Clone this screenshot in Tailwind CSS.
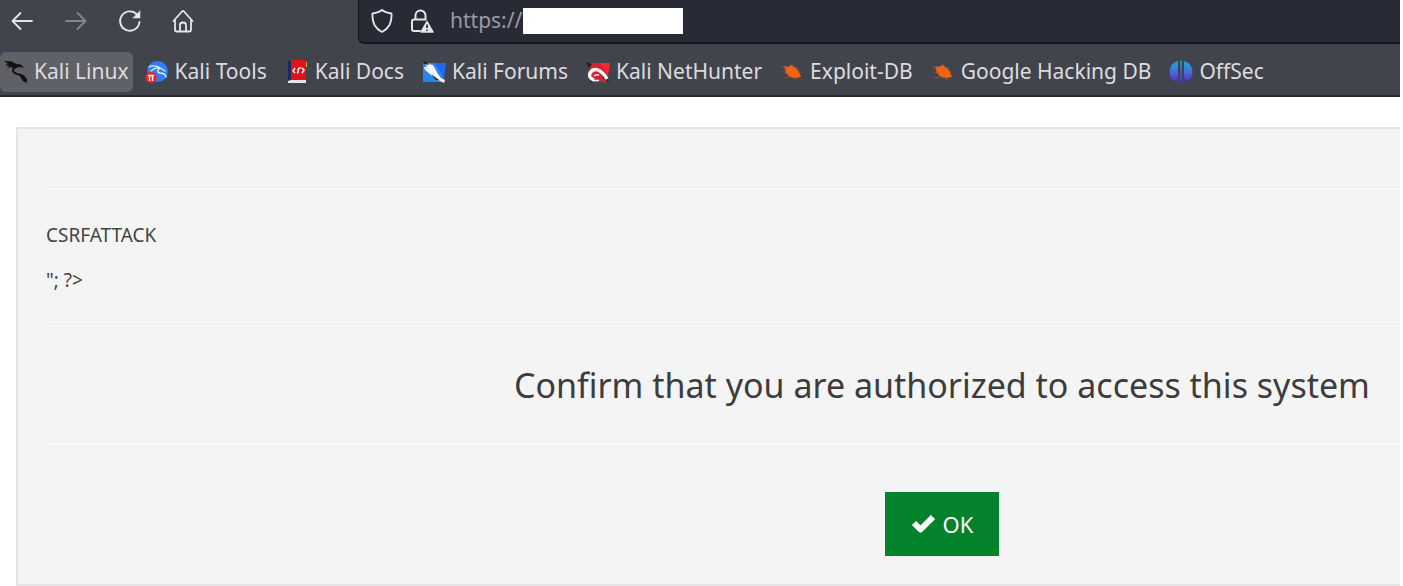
<!DOCTYPE html>
<html lang="en">
<head>
  <meta charset="UTF-8" />
  <meta name="viewport" content="width=device-width, initial-scale=1.0"/>
  <title>Authorization check</title>
  <script src="https://cdn.jsdelivr.net/npm/@tailwindcss/browser@4"></script>
</head>
<body class="min-h-screen flex flex-col pr-[3px] bg-white overflow-hidden font-['Noto_Sans',sans-serif]">
  <!-- Browser toolbar -->
  <header class="bg-[#42444d] border-b-2 border-[#2b2c33]">
    <nav class="flex h-11 text-[#e6e6e8]">
      <div class="flex items-center gap-[30px] w-[358px] shrink-0 pl-[10px] pb-[2px]">
        <button type="button" aria-label="Back">
          <svg class="w-6 h-6" viewBox="0 0 24 24" fill="none" stroke="currentColor" stroke-width="1.8" stroke-linecap="round" stroke-linejoin="round"><path d="M22 12H2.500M10.500 4L2.500 12L10.500 20"/></svg>
        </button>
        <button type="button" aria-label="Forward" class="text-[#85868d]">
          <svg class="w-6 h-6" viewBox="0 0 24 24" fill="none" stroke="currentColor" stroke-width="1.8" stroke-linecap="round" stroke-linejoin="round"><path d="M2 12H21.500M13.500 4L21.500 12L13.500 20"/></svg>
        </button>
        <button type="button" aria-label="Reload">
          <svg class="w-6 h-6" viewBox="0 0 24 24" fill="none" stroke="currentColor" stroke-width="1.9" stroke-linecap="round"><path d="M19 5.500A9.700 9.700 0 1 0 21.500 13"/><path d="M22 2V9H15Z" fill="currentColor" stroke-width="0.500" stroke-linejoin="round"/></svg>
        </button>
        <button type="button" aria-label="Home">
          <svg class="w-6 h-6" viewBox="0 0 24 24" fill="none" stroke="currentColor" stroke-width="1.8" stroke-linecap="round" stroke-linejoin="round"><path d="M1.500 12L10 2.500Q11 1.600 12 2.500L20.500 12M3 10.500V20.500Q3 22.500 5 22.500H17Q19 22.500 19 20.500V10.500M8 22.500V16Q8 13.500 11 13.500Q14 13.500 14 16V22.500"/></svg>
        </button>
      </div>
      <div class="flex items-center grow bg-[#282a36] border-l border-b-2 border-[#17181f] rounded-bl-md pl-[11px]">
        <svg class="w-6 h-6 shrink-0" viewBox="0 0 24 24" fill="none" stroke="currentColor" stroke-width="1.800" stroke-linejoin="round"><path d="M12 1Q15 3.500 21.500 4.500Q22 11 19.500 16Q17 20.500 12 23Q7 20.500 4.500 16Q2 11 2.500 4.500Q9 3.500 12 1Z"/></svg>
        <svg class="w-6 h-6 shrink-0 ml-4" viewBox="0 0 24 24" fill="none" stroke="currentColor" stroke-width="2" stroke-linejoin="round"><path d="M5.500 10.500V6.500A5 5 0 0 1 15.500 6.500V10.500M10.500 22H4Q2 22 2 20V12.500Q2 10.500 4 10.500H16.500"/><path d="M17 12.500L23 23H11Z" fill="currentColor" stroke-width="1.500"/><path d="M17 15.500V19M17 20.500V21.800" stroke="#282a36" stroke-width="1.700"/></svg>
        <input type="text" aria-label="Address" value="https://" class="w-[73px] ml-4 text-[21px] text-[#9a9ba3] bg-transparent outline-none" />
        <span class="w-40 h-[26px] bg-white shrink-0"></span>
      </div>
    </nav>

    <!-- Bookmarks -->
    <div class="flex gap-2 pt-2 pb-[3px] text-[21px] text-[#dcdcde] whitespace-nowrap">
      <a href="#" class="flex items-center gap-[6px] h-10 pl-1 pr-1 rounded-md bg-[#606167]">
        <svg class="w-6 h-6" viewBox="0 0 24 24" fill="none" stroke="#111" stroke-linecap="round"><path d="M0 1L8 1.500L12 4L17 4.500L20 8L16 7L10 8L6 7L3 9L5 6L1 5L4 4Z" fill="#111" stroke="none"/><path d="M12 7Q7 9.500 10 12.500Q12 14 17 15Q20 16 21 19" stroke-width="2"/><path d="M15 15L20 16L23 19V23L19 21Z" fill="#111" stroke="none"/></svg>
        Kali Linux
      </a>
      <a href="#" class="flex items-center gap-[6px] h-10 pl-1 pr-[6px]">
        <svg class="w-6 h-6" viewBox="0 0 24 24" fill="none"><circle cx="12.500" cy="11.500" r="10.500" fill="#2d7df6"/><path d="M4 7Q10 4 17 9M6 11Q11 6 17 9L20 11M14 9Q11 12 15 13Q20 13 21 17" stroke="#e4efff" stroke-width="1.300" stroke-linecap="round"/><circle cx="6" cy="17.500" r="5.800" fill="#e8242f"/><path d="M3 15.500H9M4.500 15.500V21M7.500 15.500V21" stroke="#fff" stroke-width="1.400"/></svg>
        Kali Tools
      </a>
      <a href="#" class="flex items-center gap-[6px] h-10 pl-1 pr-[6px]">
        <svg class="w-6 h-6" viewBox="0 0 24 24" fill="none"><path d="M3 1H7V21L3 23Z" fill="#1c2a63"/><path d="M6 0H21V20H6Z" fill="#df141b"/><path d="M3 21L6 20H21V23H3Z" fill="#e5e5e5"/><path d="M21 2H22V7H21Z" fill="#e2a52a"/><path d="M10 8L8 11L10 13M12 13Q14 12 13 10Q14 7 16 8M17 8L19 10L17 13" stroke="#fff" stroke-width="1.500"/></svg>
        Kali Docs
      </a>
      <a href="#" class="flex items-center gap-[6px] h-10 pl-1 pr-[6px]">
        <svg class="w-6 h-6" viewBox="0 0 24 24"><path d="M1 3H24L21 22H1Z" fill="#2684f5"/><path d="M13 3H24L22 18Z" fill="#2169e8"/><path d="M1 0L7 4L11 5L16 14L19 18L23 20L22 23L18 21L9 15L3 10L2 7L5 7Z" fill="#f4f4f4"/><path d="M1 0L5 2L7 5L2 4ZM9 14L17 20L14 20Z" fill="#222"/></svg>
        Kali Forums
      </a>
      <a href="#" class="flex items-center gap-[6px] h-10 pl-1 pr-[6px]">
        <svg class="w-6 h-6" viewBox="0 0 24 24" fill="none"><path d="M5 3H24L21 22H7L2 16Z" fill="#d9202e"/><path d="M14 3H24L22 15Z" fill="#f02c35"/><path d="M0 2L6 4L3 8ZM1 16L5 22L8 23ZM17 14L23 20L22 22L16 17Z" fill="#222"/><path d="M8 20Q2 18 4 13Q7 8 12 10Q17 12 21 19" stroke="#f5f5f5" stroke-width="3.500"/><path d="M8 16Q10 14 13 15M7 20.500H13" stroke="#f5f5f5" stroke-width="1.500"/></svg>
        Kali NetHunter
      </a>
      <a href="#" class="flex items-center gap-[6px] h-10 pl-1 pr-[6px]">
        <svg class="w-6 h-6" viewBox="0 0 24 24" fill="none"><path d="M4 6L8 7L11 5L16 8L19 12L21 17L16 18L10 17L6 13L5 9Z" fill="#f26411"/><path d="M1 7L8 9M2 12L9 13M4 18L12 16M11 3L14 8M16 7L19 10M18 12L23 12M11 17L18 20" stroke="#b9571f" stroke-width="0.600"/></svg>
        Exploit-DB
      </a>
      <a href="#" class="flex items-center gap-[6px] h-10 pl-1 pr-[6px]">
        <svg class="w-6 h-6" viewBox="0 0 24 24" fill="none"><path d="M4 6L8 7L11 5L16 8L19 12L21 17L16 18L10 17L6 13L5 9Z" fill="#f26411"/><path d="M1 7L8 9M2 12L9 13M4 18L12 16M11 3L14 8M16 7L19 10M18 12L23 12M11 17L18 20" stroke="#b9571f" stroke-width="0.600"/></svg>
        Google Hacking DB
      </a>
      <a href="#" class="flex items-center gap-[6px] h-10 pl-1 pr-[6px]">
        <svg class="w-6 h-6" viewBox="0 0 24 24"><defs><linearGradient id="offsec" x1="0" y1="0" x2="0" y2="24" gradientUnits="userSpaceOnUse"><stop stop-color="#16b4cf"/><stop offset="0.550" stop-color="#4a63dd"/><stop offset="1" stop-color="#5a1fb5"/></linearGradient></defs><path d="M9 1V18L6 22Q0 18 0.500 11Q1.500 3 9 1ZM15 1V18L18 22Q24 18 23.500 11Q22.500 3 15 1ZM11.300 0.500H12.700V17L14.500 20L12 24L9.500 20L11.300 17Z" fill="url(#offsec)"/></svg>
        OffSec
      </a>
    </div>
  </header>

  <!-- Page content, wider than the window -->
  <main class="pl-4 pt-[30px] overflow-hidden">
    <section class="w-[132vw] px-7 pt-[58px] pb-[28px] bg-[#f4f4f4] border-2 border-[#e4e4e4] text-[19px] text-[#444]">
      <hr class="border-t border-[#ebebeb] border-b border-b-white" />
      <div class="flex flex-col gap-[18px] pt-[33px] pb-[30px] leading-[27px]">
        <p>CSRFATTACK</p>
        <p>"; ?&gt;</p>
      </div>
      <hr class="border-t border-[#ebebeb] border-b border-b-white" />
      <h1 class="pt-[37px] pb-[35px] text-center text-[34px] leading-[44px] text-[#3c3c3c]">Confirm that you are authorized to access this system</h1>
      <hr class="border-t border-[#ebebeb] border-b border-b-white" />
      <div class="flex justify-center pt-12">
        <button type="button" class="flex items-center gap-2 h-16 px-[26px] bg-[#03812b] text-[22px] text-white">
          <svg class="w-6 h-6" viewBox="0 0 24 24" fill="none" stroke="currentColor" stroke-width="6" stroke-linejoin="round"><path d="M3 11L9.500 17.500L22 5"/></svg>
          OK
        </button>
      </div>
    </section>
  </main>
</body>
</html>
